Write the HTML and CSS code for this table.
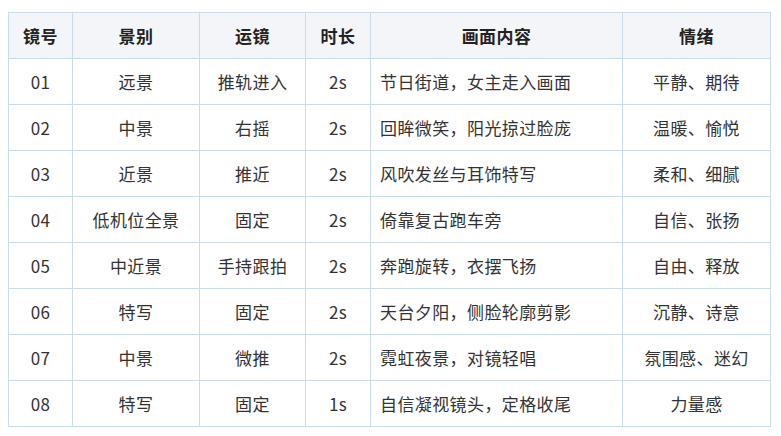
FILE: index.html
```html
<!DOCTYPE html>
<html lang="zh-CN">
<head>
<meta charset="utf-8">
<title>分镜表</title>
<link rel="stylesheet" href="styles.css">
</head>
<body>
<div class="wrap">
<table class="shots">
<colgroup>
<col class="c1"><col class="c2"><col class="c3"><col class="c4"><col class="c5"><col class="c6">
</colgroup>
<thead>
<tr><th>镜号</th><th>景别</th><th>运镜</th><th>时长</th><th>画面内容</th><th>情绪</th></tr>
</thead>
<tbody>
<tr><td>01</td><td>远景</td><td>推轨进入</td><td>2s</td><td class="desc">节日街道，女主走入画面</td><td>平静、期待</td></tr>
<tr><td>02</td><td>中景</td><td>右摇</td><td>2s</td><td class="desc">回眸微笑，阳光掠过脸庞</td><td>温暖、愉悦</td></tr>
<tr><td>03</td><td>近景</td><td>推近</td><td>2s</td><td class="desc">风吹发丝与耳饰特写</td><td>柔和、细腻</td></tr>
<tr><td>04</td><td>低机位全景</td><td>固定</td><td>2s</td><td class="desc">倚靠复古跑车旁</td><td>自信、张扬</td></tr>
<tr><td>05</td><td>中近景</td><td>手持跟拍</td><td>2s</td><td class="desc">奔跑旋转，衣摆飞扬</td><td>自由、释放</td></tr>
<tr><td>06</td><td>特写</td><td>固定</td><td>2s</td><td class="desc">天台夕阳，侧脸轮廓剪影</td><td>沉静、诗意</td></tr>
<tr><td>07</td><td>中景</td><td>微推</td><td>2s</td><td class="desc">霓虹夜景，对镜轻唱</td><td>氛围感、迷幻</td></tr>
<tr><td>08</td><td>特写</td><td>固定</td><td>1s</td><td class="desc">自信凝视镜头，定格收尾</td><td>力量感</td></tr>
</tbody>
</table>
</div>
</body>
</html>
```
FILE: styles.css
```css
html, body {
  margin: 0;
  padding: 0;
  background: #ffffff;
}
.wrap {
  padding: 12px 0 0 8px;
}
.shots {
  border-collapse: collapse;
  table-layout: fixed;
  width: 762px;
  font-family: "Noto Sans CJK SC", "Noto Sans", sans-serif;
  font-size: 17px;
  letter-spacing: 0.4px;
  color: #333333;
}
.c1 { width: 64px; }
.c2 { width: 127px; }
.c3 { width: 106px; }
.c4 { width: 65px; }
.c5 { width: 252px; }
.c6 { width: 148px; }
.shots th,
.shots td {
  border: 1px solid #c8dcec;
  height: 45px;
  padding: 0 9px;
  text-align: center;
  vertical-align: middle;
  white-space: nowrap;
  line-height: 20px;
}
.shots th {
  background: #f3f5f8;
  font-weight: 700;
  color: #222222;
}
.shots td.desc {
  text-align: left;
}
```
